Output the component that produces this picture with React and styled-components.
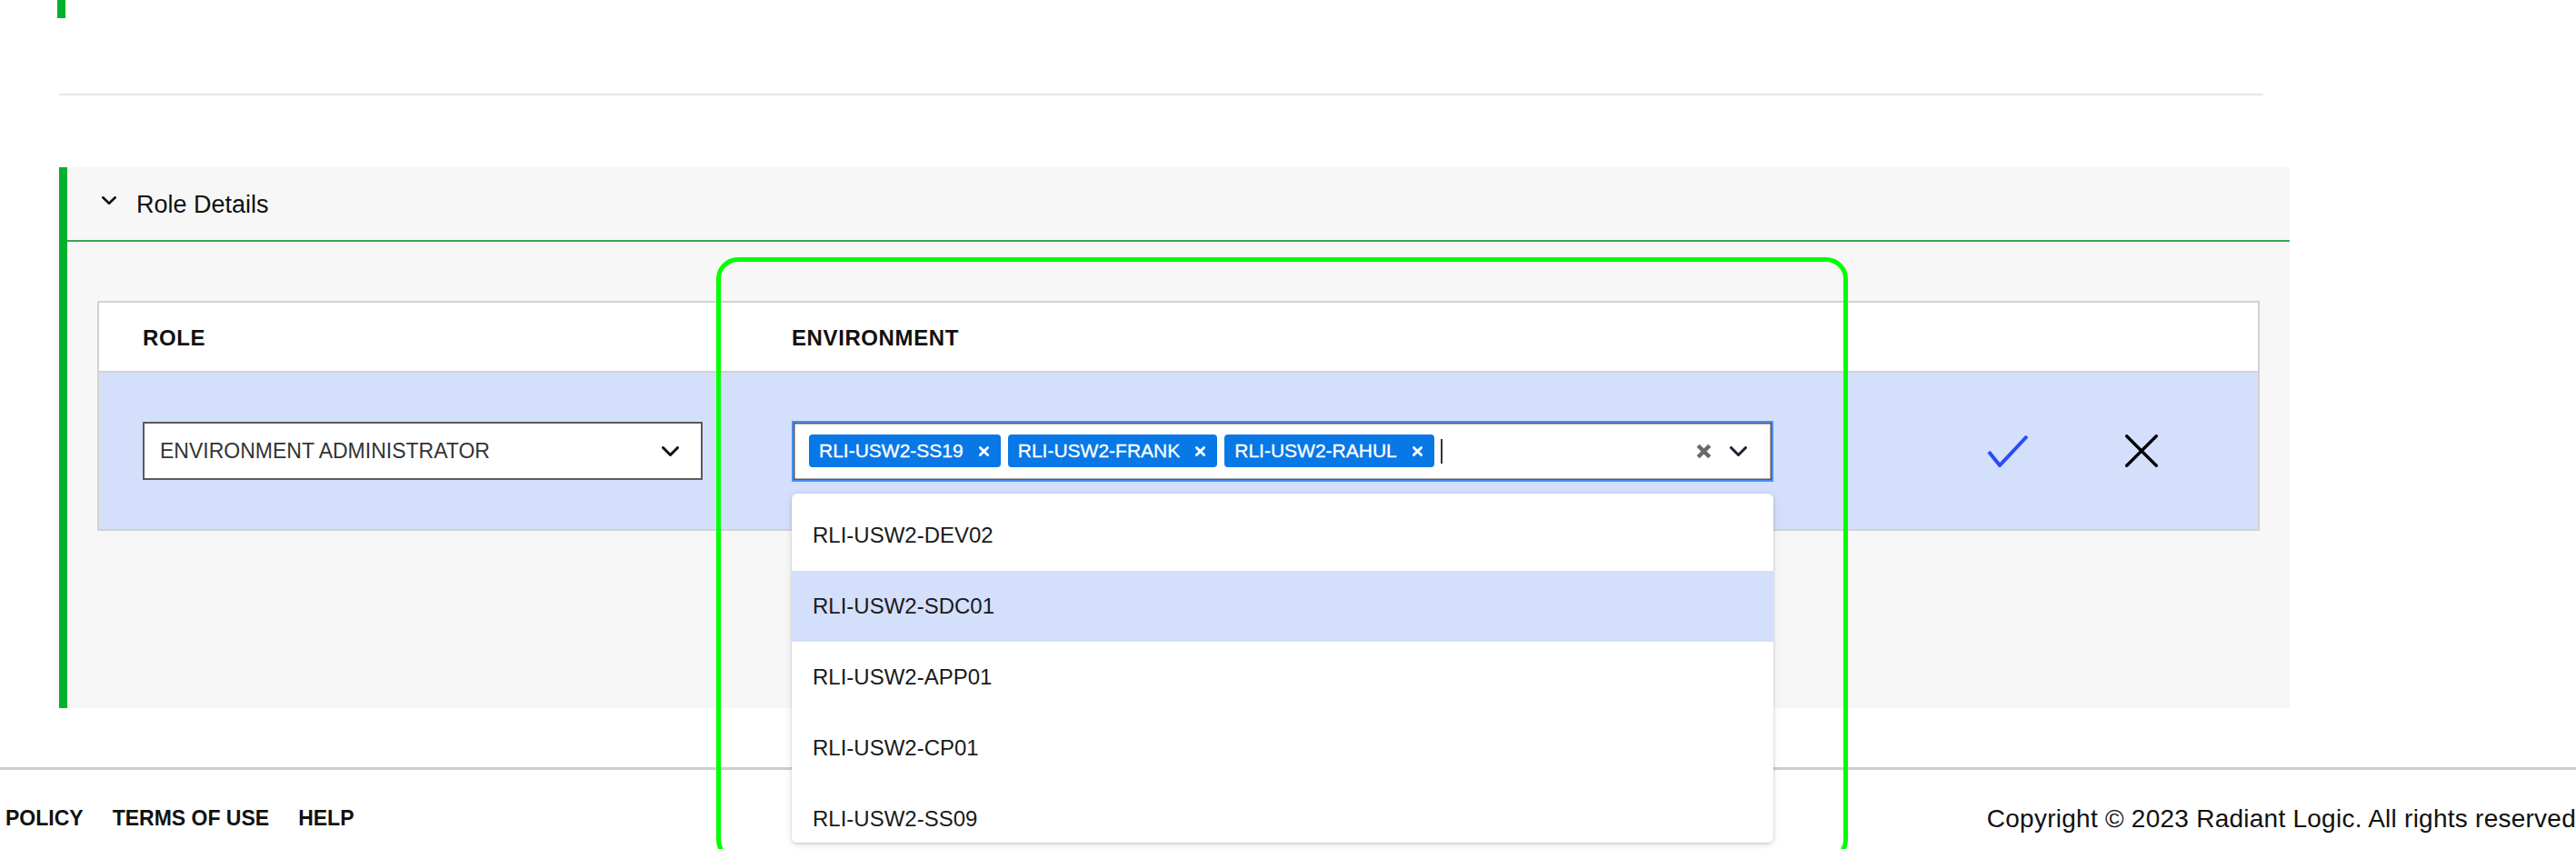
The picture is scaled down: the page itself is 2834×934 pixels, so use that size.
import React from "react";
import styled, { createGlobalStyle } from "styled-components";

const GlobalStyle = createGlobalStyle`
  *, *::before, *::after { box-sizing: border-box; }
  html, body { margin: 0; padding: 0; background: #fff; }
  body {
    font-family: "Liberation Sans", Arial, sans-serif;
    color: #111;
    overflow: hidden;
  }
`;

const Page = styled.div`
  position: relative;
  width: 2834px;
  height: 934px;
  overflow: hidden;
`;

const PrevPanelEdge = styled.div`
  margin-left: 63px;
  width: 9px;
  height: 20px;
  background: #05b02e;
`;

const SectionDivider = styled.div`
  margin: 83px 0 0 65px;
  width: 2425px;
  height: 2px;
  background: #e3e9e3;
`;

const Panel = styled.section`
  margin: 79px 0 0 65px;
  width: 2454px;
  height: 595px;
  border-left: 9px solid #05b02e;
  background: #f7f7f7;
  display: flex;
  flex-direction: column;
`;

const PanelHeader = styled.div`
  height: 82px;
  display: flex;
  align-items: center;
  gap: 22px;
  padding: 2px 0 0 38px;
  border-bottom: 2px solid #32a852;
  font-size: 27px;
  color: #111;
`;

const HeaderChevron = styled.span`
  display: flex;
  margin-top: -9px;
`;

const PanelBody = styled.div`
  padding: 65px 33px 0 33px;
`;

const Table = styled.div`
  border: 2px solid #d2d2d2;
  background: #fff;
`;

const Row = styled.div`
  display: grid;
  grid-template-columns: 762px 1080px 1fr;
  align-items: center;
  height: ${(p) => p.$height}px;
  background: ${(p) => p.$bg};
  border-bottom: ${(p) => (p.$divider ? "2px solid #d2d2d2" : "none")};
`;

const HeadCell = styled.div`
  padding-left: ${(p) => p.$indent || 0}px;
  padding-top: 3px;
  font-size: 24px;
  font-weight: 700;
  letter-spacing: 0.6px;
  color: #111;
`;

const RoleCell = styled.div`
  padding-left: 48px;
`;

const RoleSelect = styled.div`
  width: 616px;
  height: 64px;
  border: 2px solid #5a5a5a;
  background: #fff;
  display: flex;
  align-items: center;
  justify-content: space-between;
  padding: 0 24px 0 17px;
  font-size: 23px;
  color: #333;
`;

const EnvCell = styled.div`
  position: relative;
`;

const MultiSelect = styled.div`
  width: 1080px;
  height: 67px;
  border: 2px solid #4b8ff6;
  box-shadow: inset 0 0 0 1.5px #5a5a5a;
  background: #fff;
  display: flex;
  align-items: center;
  padding: 0 27px 0 17px;
`;

const Tags = styled.div`
  display: flex;
  align-items: center;
  gap: 8px;
  flex: 1;
`;

const Tag = styled.span`
  height: 36px;
  display: inline-flex;
  align-items: center;
  gap: 17px;
  padding: 0 13px 0 11px;
  border-radius: 4px;
  background: #0878e6;
  color: #fff;
  font-size: 21px;
  white-space: nowrap;
  -webkit-text-stroke: 0.3px #fff;
`;

const Caret = styled.span`
  width: 2px;
  height: 27px;
  margin-left: -1px;
  background: #333;
`;

const Indicators = styled.div`
  display: flex;
  align-items: center;
  gap: 20px;
`;

const Menu = styled.div`
  position: absolute;
  top: calc(100% + 13px);
  left: 0;
  width: 1080px;
  height: 384px;
  padding-top: 7px;
  background: #fff;
  border-radius: 6px;
  box-shadow: 0 1px 3px rgba(0, 0, 0, 0.18), 0 2px 10px rgba(0, 0, 0, 0.1);
  overflow: hidden;
  z-index: 5;
`;

const Option = styled.div`
  height: 78px;
  display: flex;
  align-items: center;
  padding-left: 23px;
  font-size: 24px;
  color: #1a1a1a;
  background: ${(p) => (p.$active ? "#d4dffc" : "#fff")};
`;

const Actions = styled.div`
  display: flex;
  align-items: center;
  gap: 106px;
  padding-left: 235px;
`;

const IconButton = styled.button`
  border: 0;
  padding: 0;
  background: none;
  display: flex;
  cursor: pointer;
`;

const FooterLine = styled.div`
  margin-top: 65px;
  height: 3px;
  background: #cdcdcd;
`;

const FooterRow = styled.footer`
  height: 87px;
  padding: 20px 0 0 6px;
  display: flex;
  align-items: center;
  justify-content: space-between;
`;

const FooterLinks = styled.nav`
  display: flex;
  gap: 32px;
`;

const FooterLink = styled.a`
  font-size: 23px;
  font-weight: 700;
  color: #111;
  text-decoration: none;
`;

const Copyright = styled.span`
  font-size: 28px;
  letter-spacing: 0.25px;
  white-space: nowrap;
  color: #111;
`;

const Highlight = styled.div`
  position: absolute;
  left: 788px;
  top: 283px;
  width: 1245px;
  height: 665px;
  border: 5px solid #00ff00;
  border-radius: 24px;
  pointer-events: none;
  z-index: 10;
`;

const Chevron = ({ w = 19, h = 11, stroke = 3, color = "#111" }) => (
  <svg width={w} height={h} viewBox={`0 0 ${w} ${h}`} fill="none">
    <polyline
      points={`${stroke / 2},${stroke / 2} ${w / 2},${h - stroke / 2} ${w - stroke / 2},${stroke / 2}`}
      stroke={color}
      strokeWidth={stroke}
      strokeLinecap="round"
      strokeLinejoin="round"
    />
  </svg>
);

const Cross = ({ size = 12, stroke = 2.5, color = "#fff", cap = "round" }) => (
  <svg width={size} height={size} viewBox={`0 0 ${size} ${size}`} fill="none">
    <path
      d={`M${stroke / 2} ${stroke / 2} L${size - stroke / 2} ${size - stroke / 2} M${size - stroke / 2} ${stroke / 2} L${stroke / 2} ${size - stroke / 2}`}
      stroke={color}
      strokeWidth={stroke}
      strokeLinecap={cap}
    />
  </svg>
);

const Check = () => (
  <svg width="46" height="36" viewBox="0 0 46 36" fill="none">
    <polyline
      points="2,19 14,34 44,2"
      stroke="#2a4bf6"
      strokeWidth="4"
      strokeLinecap="butt"
      strokeLinejoin="miter"
    />
  </svg>
);

const selected = ["RLI-USW2-SS19", "RLI-USW2-FRANK", "RLI-USW2-RAHUL"];
const options = [
  "RLI-USW2-DEV02",
  "RLI-USW2-SDC01",
  "RLI-USW2-APP01",
  "RLI-USW2-CP01",
  "RLI-USW2-SS09",
];

const App = () => {
  return (
    <Page>
      <GlobalStyle />
      <PrevPanelEdge />
      <SectionDivider />
      <Panel>
        <PanelHeader>
          <HeaderChevron>
            <Chevron w={16} h={9} stroke={2.6} />
          </HeaderChevron>
          <span>Role Details</span>
        </PanelHeader>
        <PanelBody>
          <Table>
            <Row $height={77} $bg="#fff" $divider>
              <HeadCell $indent={48}>ROLE</HeadCell>
              <HeadCell>ENVIRONMENT</HeadCell>
              <div />
            </Row>
            <Row $height={172} $bg="#d4dffc">
              <RoleCell>
                <RoleSelect>
                  <span>ENVIRONMENT ADMINISTRATOR</span>
                  <Chevron w={19} h={11} stroke={3} />
                </RoleSelect>
              </RoleCell>
              <EnvCell>
                <MultiSelect>
                  <Tags>
                    {selected.map((env) => (
                      <Tag key={env}>
                        {env}
                        <Cross size={11} stroke={2.8} />
                      </Tag>
                    ))}
                    <Caret />
                  </Tags>
                  <Indicators>
                    <Cross size={17} stroke={4.4} color="#696969" cap="butt" />
                    <Chevron w={19} h={11} stroke={3} color="#1b2130" />
                  </Indicators>
                </MultiSelect>
                <Menu>
                  {options.map((opt) => (
                    <Option key={opt} $active={opt === "RLI-USW2-SDC01"}>
                      {opt}
                    </Option>
                  ))}
                </Menu>
              </EnvCell>
              <Actions>
                <IconButton aria-label="save">
                  <Check />
                </IconButton>
                <IconButton aria-label="cancel">
                  <Cross size={36} stroke={3.4} color="#000" />
                </IconButton>
              </Actions>
            </Row>
          </Table>
        </PanelBody>
      </Panel>
      <FooterLine />
      <FooterRow>
        <FooterLinks>
          <FooterLink href="#">POLICY</FooterLink>
          <FooterLink href="#">TERMS OF USE</FooterLink>
          <FooterLink href="#">HELP</FooterLink>
        </FooterLinks>
        <Copyright>Copyright © 2023 Radiant Logic. All rights reserved</Copyright>
      </FooterRow>
      <Highlight />
    </Page>
  );
};

export default App;
